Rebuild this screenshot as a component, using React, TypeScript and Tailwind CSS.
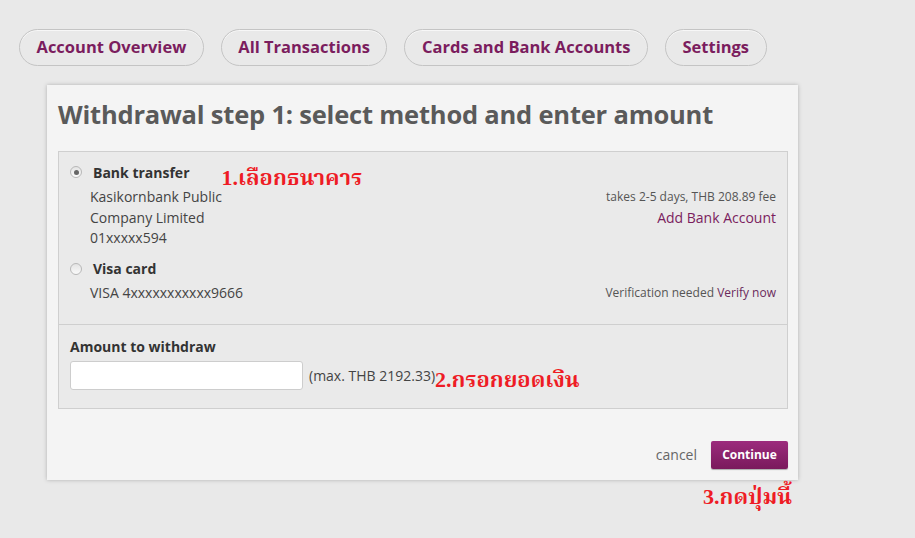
import React from 'react';

const navItems = ['Account Overview', 'All Transactions', 'Cards and Bank Accounts', 'Settings'];

const Radio = ({ checked }: { checked?: boolean }) => (
    <span className="w-[12px] h-[12px] rounded-full border border-[#b8b8b8] bg-gradient-to-b from-[#e4e4e4] to-[#fafafa] flex items-center justify-center shrink-0">
        {checked && <span className="w-[5px] h-[5px] rounded-full bg-[#666]" />}
    </span>
);

const Note = ({ children, className = '' }: { children: React.ReactNode; className?: string }) => (
    <span className={`text-[#ee1c25] font-bold text-[22px] leading-none ${className}`} style={{ fontFamily: '"Liberation Serif", "Noto Serif Thai", "Noto Sans Thai", serif' }}>
        {children}
    </span>
);

export default function App() {
    return (
        <div className="min-h-[538px] w-[915px] bg-[#e9e9e9] text-[#444] font-['Open_Sans','Liberation_Sans',sans-serif] overflow-hidden">
            {/* top nav */}
            <div className="flex gap-[17px] pl-[19px] pt-[29px]">
                {navItems.map((item) => (
                    <div key={item} className="h-[37px] px-[16.5px] rounded-full border border-[#c4c4c4] flex items-center text-[16.5px] font-bold text-[#7b1d5e] shadow-[inset_0_1px_0_#f7f7f7]">
                        {item}
                    </div>
                ))}
            </div>

            <div className="relative ml-[47px] mt-[19px] w-[751px] bg-[#f4f4f4] shadow-[0_0_4px_rgba(0,0,0,0.25)] pl-[11px] pr-[10px] pt-[11px] pb-[11px]">
                <h1 className="text-[25.5px] font-bold text-[#5a5a5a] leading-[36px] tracking-[-0.2px]">
                    Withdrawal step 1: select method and enter amount
                </h1>

                <div className="mt-[19px] border border-[#cfcfcf] bg-[#eaeaea]">
                    {/* methods */}
                    <div className="px-[11px] pt-[10px] pb-[21px] border-b border-[#cfcfcf] text-[14px]">
                        <div className="flex items-center h-[20px]">
                            <Radio checked />
                            <span className="ml-[11px] font-bold text-[#333]">Bank transfer</span>
                            <Note className="ml-[32px] mt-[11px]">1.เลือกธนาคาร</Note>
                        </div>
                        <div className="flex justify-between pl-[20px] mt-[5px] leading-[20.5px]">
                            <div>
                                <div>Kasikornbank Public</div>
                                <div>Company Limited</div>
                                <div>01xxxxx594</div>
                            </div>
                            <div className="text-right">
                                <div className="text-[12px] text-[#555]">takes 2-5 days, THB 208.89 fee</div>
                                <div className="text-[#7b1d5e]">Add Bank Account</div>
                            </div>
                        </div>

                        <div className="flex items-center h-[20px] mt-[10px]">
                            <Radio />
                            <span className="ml-[11px] font-bold text-[#333]">Visa card</span>
                        </div>
                        <div className="flex justify-between items-center pl-[20px] mt-[4px] leading-[20px]">
                            <div>VISA 4xxxxxxxxxxx9666</div>
                            <div className="text-[12px] text-[#555]">
                                Verification needed <span className="text-[#6b2a5c]">Verify now</span>
                            </div>
                        </div>
                    </div>

                    {/* amount */}
                    <div className="px-[11px] pt-[12px] pb-[17px] text-[14px]">
                        <div className="font-bold text-[#333] leading-[20px]">Amount to withdraw</div>
                        <div className="flex items-center mt-[4px]">
                            <input className="w-[233px] h-[29px] bg-white border border-[#cdcdcd] rounded-[3px] outline-none" />
                            <span className="ml-[6px]">(max. THB 2192.33)</span>
                            <Note className="mt-[8px]">2.กรอกยอดเงิน</Note>
                        </div>
                    </div>
                </div>

                <div className="flex justify-end items-center mt-[32px]">
                    <span className="text-[14px] text-[#666] mr-[14px]">cancel</span>
                    <button className="w-[77px] h-[28px] rounded-[2px] bg-gradient-to-b from-[#9c2b7d] to-[#7a1a5c] text-white text-[12px] font-bold shadow-[0_1px_1px_rgba(0,0,0,0.3)]">
                        Continue
                    </button>
                </div>

                <Note className="absolute right-[6px] top-[401px] whitespace-nowrap">3.กดปุ่มนี้</Note>
            </div>
        </div>
    );
}
